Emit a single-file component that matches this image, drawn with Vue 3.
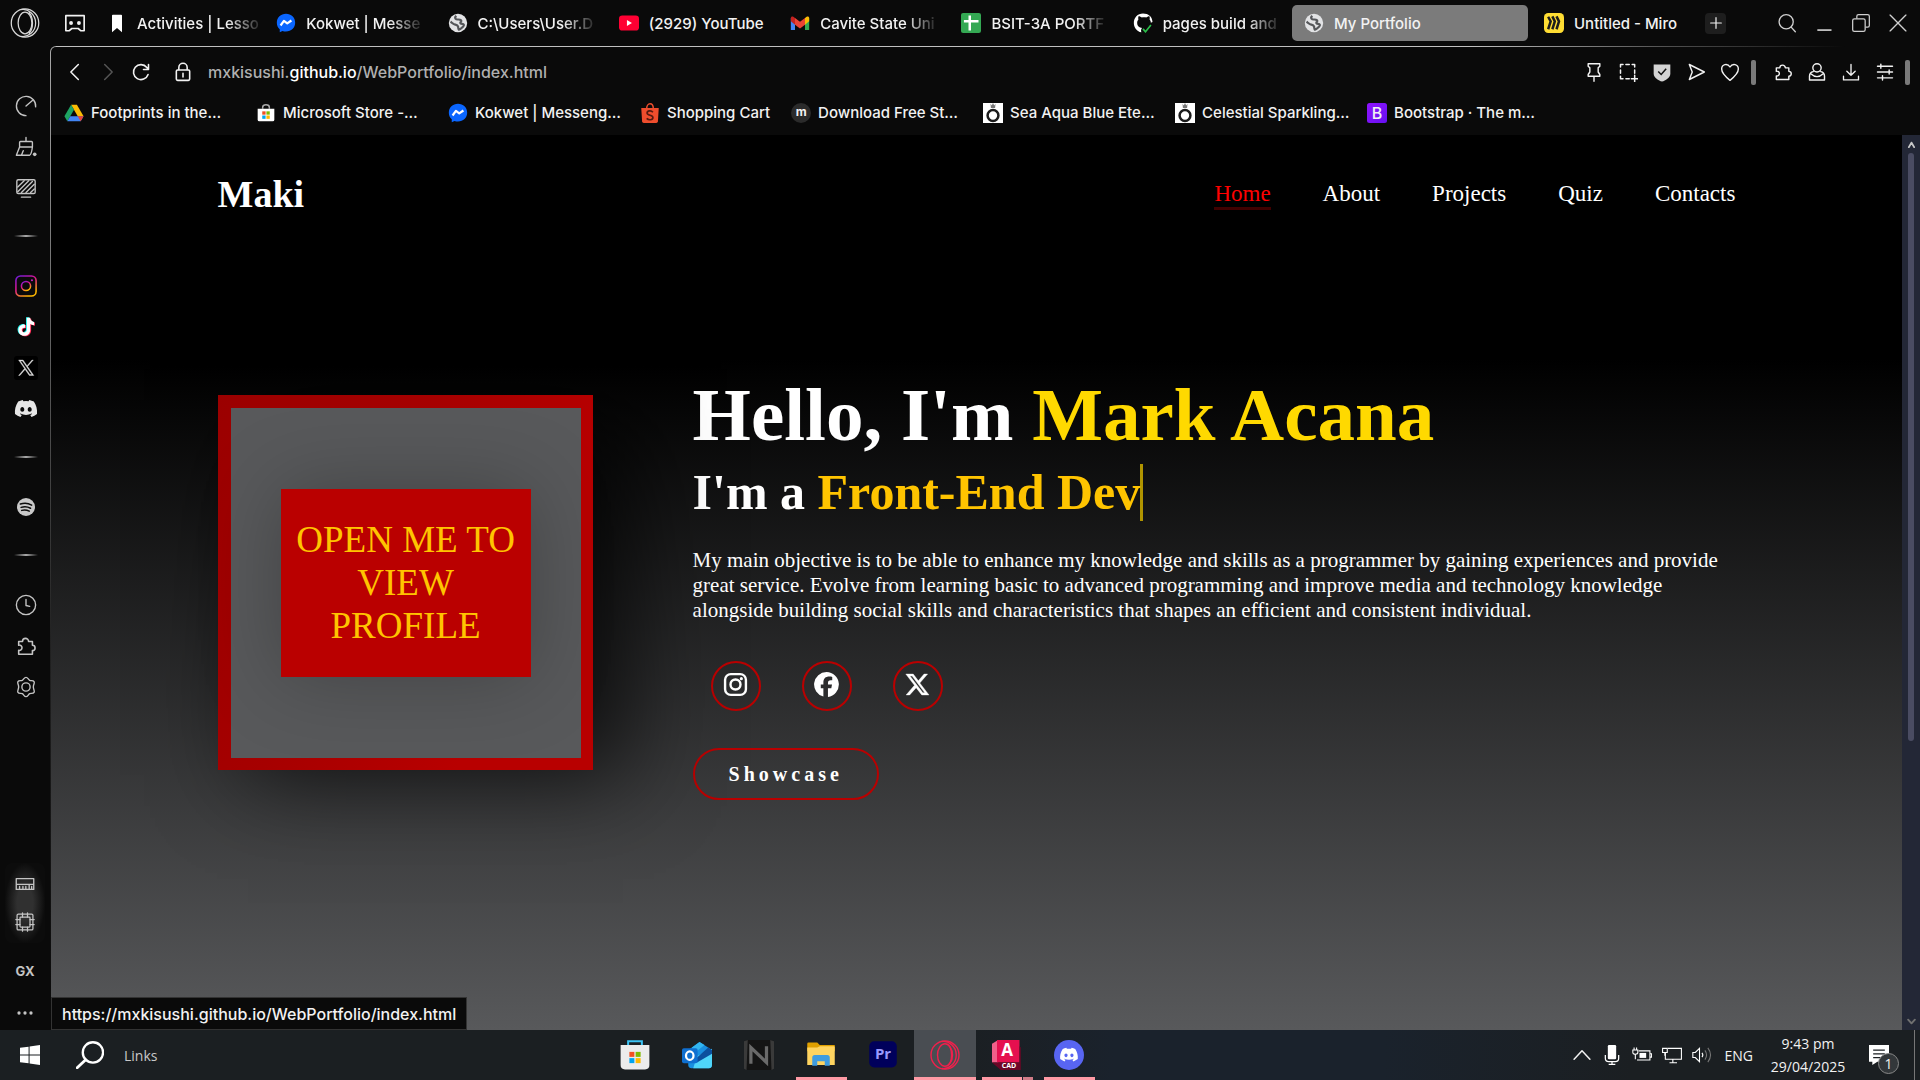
<script setup>
const stroke = (body, width = 1.5) =>
  `<g fill="none" stroke="currentColor" stroke-width="${width}" stroke-linecap="round" stroke-linejoin="round">${body}</g>`

const puzzle = stroke('<path d="M4 7h4.200a3.300 3.300 0 1 1 6.600 0H19v4.200a2.900 2.900 0 1 1 0 5.800V21H4v-4.300a2.900 2.900 0 1 0 0-5.600z"/>', 1.7)
const globe = '<circle cx="12" cy="12" r="11" fill="#e2e3e5"/><path d="M10 3.500C7 6 9.500 8 12 7.800c3.500-.2 5 1.700 3.200 3.200-1 .8-.2 2 1.800 2s3 1.500 1 3.500-3.500 3-5 3.500c-1-1-.5-2.500-1-4-.6-1.700-2.500-1.800-4-2.300S4.500 11.500 3 10.500" fill="none" stroke="#55575a" stroke-width="2.600" stroke-linejoin="round"/>'
const messenger = '<path d="M12 1C5.700 1 1 5.500 1 11.600c0 3.200 1.300 6 3.500 7.900V23l3.300-1.500c1.300.4 2.700.6 4.200.6 6.300 0 11-4.500 11-10.500S18.300 1 12 1z" fill="#0a66ff"/><path d="M5.500 15l4-5.500 4 3 5-3.500" fill="none" stroke="#fff" stroke-width="2.600" stroke-linejoin="round"/>'
const discordShape = 'M19.800 4.600A18 18 0 0 0 15.300 3l-.7 1.300a17 17 0 0 0-5.200 0L8.700 3a18 18 0 0 0-4.500 1.600C1.400 8.800.6 13 1 17.100A18 18 0 0 0 6.500 20l1.300-2c-.7-.3-1.300-.6-1.900-1l.5-.4a13 13 0 0 0 11.200 0l.5.4c-.6.4-1.200.7-1.900 1l1.300 2a18 18 0 0 0 5.500-2.900c.5-4.800-.8-8.900-3.200-12.500zM8.300 14.700c-1.100 0-2-1-2-2.300s.9-2.300 2-2.300 2 1 2 2.300-.9 2.300-2 2.300zm7.400 0c-1.100 0-2-1-2-2.300s.9-2.300 2-2.300 2 1 2 2.300-.9 2.300-2 2.300z'
const xShape = 'M14.300 10.200L22.300 1h-1.900l-7 8L7.900 1H1.500l8.400 12.100L1.500 22.800h1.900l7.300-8.500 5.900 8.500H23zM4.100 2.400H7l13.300 19h-2.900z'
const note = 'M13 2h3.500c.2 2.500 1.800 4.200 4.300 4.500V10c-1.600 0-3-.5-4.200-1.300V15c0 8.500-12.300 8.800-12.800.5C3.700 11.400 7 8.800 11 9.300v3.700c-2-.5-3.700.6-3.600 2.400.2 3.600 5.600 3.300 5.600-.6z'
const ring = '<rect width="24" height="24" fill="#fff"/><circle cx="12" cy="15" r="6.500" fill="none" stroke="#1b1b1b" stroke-width="3"/><path d="M9 1l1.500 2L12 0l1.500 3L15 1l-.5 5h-5z" fill="#777"/>'
const igBody = '<rect x="2" y="2" width="20" height="20" rx="5.500"/><circle cx="12" cy="12" r="4.800"/>'

const icons = {
  opera: '<g fill="none" stroke="currentColor" stroke-width="1"><ellipse cx="12" cy="12" rx="11" ry="11.300"/><ellipse cx="12" cy="12" rx="5.500" ry="8.700"/><path d="M9 1.300C14 .5 20.500 4.500 20.500 12S14 23.500 9 22.700M15 3.600c4 3.400 4 13.400 0 16.800"/></g>',
  operaRed: '<g fill="none" stroke="#f0204c" stroke-width="1.100"><circle cx="12" cy="12" r="11.200"/><ellipse cx="12" cy="12" rx="6" ry="9"/><path d="M9.500 1.200C15 .5 21 5 21 12s-6 11.500-11.500 10.800M13.500 3.200C18.500 6 18.500 18 13.500 20.800"/></g>',
  island: stroke('<path d="M2 4h20v16.500h-3.500l-3-2.500h-7l-3 2.500H2z"/>', 1.8) + '<circle cx="7.700" cy="12" r="2.100" fill="currentColor"/><circle cx="16.300" cy="12" r="2.100" fill="currentColor"/>',
  bookmark: '<path d="M6 3q0-1 1-1h10q1 0 1 1v20l-6-5-6 5z" fill="#fff"/>',
  messenger, globe, ring, puzzle,
  youtube: '<rect x="0" y="3" width="24" height="18" rx="4" fill="#ff0033"/><path d="M9.500 8.500v7l6-3.500z" fill="#fff"/>',
  gmail: '<path d="M1 6v14.500h5V11z" fill="#4285f4"/><path d="M23 6v14.500h-5V11z" fill="#34a853"/><path d="M1 6v4l5 4V6L4 4.500C2.500 3.500 1 4.500 1 6z" fill="#c5221f"/><path d="M23 6v4l-5 4V6l2-1.500c1.500-1 3 0 3 1.500z" fill="#fbbc04"/><path d="M6 6l6 4.500L18 6v8l-6 4.500L6 14z" fill="#ea4335"/>',
  sheets: '<rect x="0" y="0" width="24" height="24" rx="2.500" fill="#34a853"/><path d="M10.500 3v18M3.500 10h17.500" stroke="#fff" stroke-width="3"/>',
  github: '<path d="M10 23c-1-3 .2-4.200 1-5-3.600-.5-6-2.200-6-6.300 0-1.700.6-3 1.500-4-.3-1-.3-2.500.2-3.700 1.700 0 2.800.8 3.800 1.500 1.700-.4 3.800-.4 5.500 0 1-.7 2-1.500 3.700-1.500.5 1.200.5 2.700.2 3.700 1 1 1.500 2.300 1.500 4l2-1C23 4 18.500.5 12 .5 5.500.5 1 5.500 1 12c0 5 3 9 7 10.700z" fill="#fff"/><path d="M12 19l3 3.500 6.500-8" fill="none" stroke="#2bbf4a" stroke-width="2"/>',
  miro: '<rect width="24" height="24" rx="5" fill="#ffdd33"/><path d="M5 4.500l3 5.500-3 9.500M10 4l3 6-3 9.500M15 4l3 6-3 9.500" fill="none" stroke="#1c1c1c" stroke-width="3"/>',
  plus: stroke('<path d="M12 4v16M4 12h16"/>', 1.8),
  search: stroke('<circle cx="11" cy="10.500" r="8.500"/><path d="M17 17l5 5.500"/>', 1.6),
  minimize: '<path d="M4 20.500h17" stroke="currentColor" stroke-width="2"/>',
  restore: stroke('<rect x="2" y="7" width="15" height="15" rx="2"/><path d="M7 6V4q0-2 2-2h11q2 0 2 2v11q0 2-2 2h-2"/>', 1.5),
  close: stroke('<path d="M2.500 2.500l19 19M21.500 2.500l-19 19"/>', 1.6),
  back: stroke('<path d="M16 3L7 12l9 9"/>', 1.8),
  forward: stroke('<path d="M8 3l9 9-9 9"/>', 1.8),
  reload: stroke('<path d="M20.500 15A9 9 0 1 1 19 6.500L21 9M21 3v6h-6"/>', 1.9),
  lock: stroke('<rect x="4" y="9.500" width="16" height="12.500" rx="1.500"/><path d="M7 9V6.500a5 5 0 0 1 10 0V9M12 13.500V18"/>', 1.9),
  pin: stroke('<path d="M5 2h14v3l-2 2v5l2 3v2H5v-2l2-3V7L5 5zM12 17v6"/>', 1.7),
  snapshot: stroke('<path d="M3 6V3h3M9.500 3h4M17 3h3v3M20 9.500v4M3 9.500v4M3 17v3h3M9.500 20h4M20 16v8M16 20h8"/>', 1.8),
  shield: '<path d="M2 3h20v11c0 5-6 8-10 9.500C8 22 2 19 2 14z" fill="#d3d3d3"/><path d="M7.500 11.500l3.500 3.500 6-7" fill="none" stroke="#111" stroke-width="1.800"/>',
  send: stroke('<path d="M4 3l18 9L4 21l3.500-9z"/>', 1.7),
  heart: stroke('<path d="M12 22C5 16.500 2 13 2 8.500 2 2.500 9 1 12 6c3-5 10-3.500 10 2.500 0 4.500-3 8-10 13.500z"/>', 1.7),
  person: stroke('<circle cx="12" cy="7" r="5"/><path d="M7.500 11.500C4.500 12 3 14 3 17v4.500h18V17c0-3-1.500-5-4.500-5.500M5 14.500c4 4 10 4 14 0"/>', 1.7),
  download: stroke('<path d="M12 3v13M7 11l5 5 5-5M3 17v4.500h18V17"/>', 1.6),
  sliders: stroke('<path d="M3 5h18M3 12h18M3 19h18M7 2.500v5M17 9.500v5M9 16.500v5"/>', 1.7),
  drive: '<path d="M8.500 2h7l8 14h-7z" fill="#fbbc04"/><path d="M8.500 2L.5 16 4 22l8-14z" fill="#1ea362"/><path d="M7.500 16h16L20 22H4z" fill="#4285f4"/><path d="M16.500 16h7L20 22z" fill="#ea4335"/>',
  store: '<path d="M8 7V5q0-3 4-3t4 3v2" fill="none" stroke="#aaa" stroke-width="1.800"/><path d="M2 7h20v13q0 2-2 2H4q-2 0-2-2z" fill="#fff"/><path d="M7.500 10h4v4h-4z" fill="#f25022"/><path d="M12.500 10h4v4h-4z" fill="#7fba00"/><path d="M7.500 15h4v4h-4z" fill="#00a4ef"/><path d="M12.500 15h4v4h-4z" fill="#ffb900"/>',
  shopee: '<path d="M8 7c0-8 8-8 8 0" fill="none" stroke="#ee4d2d" stroke-width="1.800"/><path d="M1.500 6h21l-1 16q-.2 2-2 2h-15q-1.800 0-2-2z" fill="#ee4d2d"/><path d="M15.500 11c-2-2.500-7-2-7 1 0 3.300 7.200 2.300 7 5.500-.2 3-5 3.500-7.500 1" fill="none" stroke="#561a10" stroke-width="2"/>',
  mdisc: '<circle cx="12" cy="12" r="12" fill="#2b2b2b"/>',
  bootstrap: '<defs><linearGradient id="bs" x1="0" y1="0" x2="1" y2="1"><stop offset="0" stop-color="#9013fe"/><stop offset="1" stop-color="#6610f2"/></linearGradient></defs><rect width="24" height="24" rx="3" fill="url(#bs)"/>',
  speed: stroke('<path d="M22.500 13A10.500 10.500 0 1 0 12 22.500M12 12l7-6"/>', 1.5),
  broom: stroke('<path d="M12 1.500V6M6 6h12q1 0 1 1v5H5V7q0-1 1-1zM5 12L1.500 21H16q2-1 3-9M7 21l2-5"/>', 1.5) + '<circle cx="21.500" cy="20" r="2" fill="currentColor"/>',
  wallpaper: stroke('<rect x="2" y="3" width="20" height="15" rx="1.500"/><path d="M7 22h10M3 11l7-7M3 16L15 4M7 17L19 5M12 17l9-9M17 17l4-4"/>', 1.5),
  instagram: '<defs><linearGradient id="ig" x1="0" y1="0" x2=".6" y2="1"><stop offset="0" stop-color="#6a1be0"/><stop offset=".5" stop-color="#e0178c"/><stop offset="1" stop-color="#ffb800"/></linearGradient></defs><g fill="none" stroke="url(#ig)" stroke-width="1.700"><rect x="1" y="1" width="22" height="22" rx="5"/><circle cx="12" cy="12" r="5"/></g><circle cx="18.500" cy="5.700" r="1.200" fill="#c420b8"/>',
  tiktok: `<path d="${note}" fill="#25f4ee" transform="translate(-1 -.6)"/><path d="${note}" fill="#fe2c55" transform="translate(1 .6)"/><path d="${note}" fill="#fff"/>`,
  xTile: `<rect width="24" height="24" rx="3" fill="#000"/><path d="${xShape}" fill="#ddd" stroke="#ddd" stroke-width=".5" transform="translate(3.500 3.300) scale(.71)"/>`,
  discord: `<path d="${discordShape}" fill="#e6e6e6"/>`,
  spotify: '<circle cx="12" cy="12" r="12" fill="#c9c9c9"/><path d="M4.500 8c5-1.600 11-1 15 1.500M5.500 12.500c4.500-1.300 9-.8 12.500 1.200M6.300 16.500c3.500-1 7-.6 10 1" fill="none" stroke="#0c0c0c" stroke-width="2" stroke-linecap="round"/>',
  history: stroke('<circle cx="12" cy="12" r="10.500"/><path d="M12 6v6.500l4 1"/>', 1.5),
  gear: stroke('<path d="M12 1.500c2 0 2.500 2.500 4 3.200s3.800-.3 4.800 1.400-.8 3.300-.8 5.900 1.800 4.200.8 5.900-3.300.7-4.800 1.400-2 3.200-4 3.200-2.500-2.500-4-3.200-3.800.3-4.800-1.400S4 14.600 4 12s-1.800-4.200-.8-5.900 3.300-.7 4.800-1.400 2-3.200 4-3.200z"/><circle cx="12" cy="12" r="4.500"/>', 1.5),
  ram: stroke('<path d="M1.500 5.500h21v13h-21zM1.500 12.500h21M5.500 15v3M9.500 15v3M13 15v3M17 13v5M20 15v3"/>', 1.6),
  cpu: stroke('<rect x="2.500" y="2.500" width="19" height="19" rx="1.500"/><rect x="6" y="6" width="12" height="12" rx="1"/><path d="M9 1v5M15 1v5M9 18v5M15 18v5M1 9h5M1 15h5M18 9h5M18 15h5"/>', 1.5),
  dots: '<circle cx="4" cy="12" r="2.200" fill="currentColor"/><circle cx="12" cy="12" r="2.200" fill="currentColor"/><circle cx="20" cy="12" r="2.200" fill="currentColor"/>',
  igWhite: `<g fill="none" stroke="#fff" stroke-width="2.300">${igBody}</g><circle cx="17.600" cy="6.400" r="1.500" fill="#fff"/>`,
  facebook: '<path d="M12 0a12 12 0 0 0-3 23.600V15.600H6.500V12H9v-1.600c0-4.100 1.900-6 5.900-6 .8 0 2 .1 2.600.3v3.300h-1.400c-2 0-2.700.7-2.700 2.700V12h3.900l-.7 3.600h-3.200v8.300A12 12 0 0 0 12 0z" fill="#fff"/>',
  xWhite: '<path d="M17.500 2.500h3.400l-7.500 8.600 8.800 11.400h-6.900l-5.400-6.900-6.200 6.900H.3l8-9.200L0 2.500h7.100L12 8.900zm-1.200 18h1.900L6 4.400H4z" fill="#fff" stroke="#fff" stroke-width=".4" transform="translate(.8 -.5)"/>',
  windows: '<path d="M0 3.400L10.300 2v9.500H0zM11.500 1.800L24 0v11.500H11.500zM0 12.600h10.300V22L0 20.600zM11.500 12.600H24V24l-12.500-1.800z" fill="#fff"/>',
  taskSearch: '<circle cx="14.500" cy="9.800" r="8.700" fill="none" stroke="#fff" stroke-width="2"/><path d="M8.300 16L1 23" stroke="#fff" stroke-width="2.400" stroke-linecap="round"/>',
  msStore: '<path d="M6.500 4V1h11v3" fill="none" stroke="#3cc4f5" stroke-width="1.600"/><path d="M.5 4h23v16q0 3.500-3.500 3.500H4Q.5 23.500.5 20z" fill="#ececec"/><path d="M7.500 9.500h4v4h-4z" fill="#f25022"/><path d="M12.500 9.500h4v4h-4z" fill="#7fba00"/><path d="M7.500 14.500h4v4h-4z" fill="#00a4ef"/><path d="M12.500 14.500h4v4h-4z" fill="#ffb900"/>',
  outlook: '<path d="M5 8L14 1.500 24 8v12q0 2.500-2.500 2.500h-14Q5 22.500 5 20z" fill="#1a8fe0"/><path d="M8 6l6-4.500 4 2.500-10 8z" fill="#32b5f0"/><path d="M12 13L24 7v13q0 2.500-2.500 2.500H9z" fill="#4fd5fa"/><path d="M12 14l9-8 3 2v3l-12 7z" fill="#0c4f9e"/><rect x="0" y="6.500" width="12.500" height="12" rx="1.500" fill="#0f6fd0"/><ellipse cx="6.200" cy="12.500" rx="3" ry="3.400" fill="none" stroke="#fff" stroke-width="1.800"/>',
  nApp: '<path d="M0 1l3-1h18l3 1v22l-3 1H3l-3-1z" fill="#141414"/><path d="M0 1l3-1-1 24-2-1zM24 1l-3-1 1 24 2-1z" fill="#3a3a3a"/><path d="M5.500 19V6l12.500 12V5" fill="none" stroke="#6a6a6a" stroke-width="2.600"/>',
  explorer: '<path d="M1 3q0-1 1-1h7l2 2h12v5H1z" fill="#e0a000"/><path d="M1 6h8l2-1h11.500q.5 0 .5.500V20H1z" fill="#ffd460"/><path d="M5 20.500V14q0-2 2-2h10q2 0 2 2v6.500h-4V17H9v3.500z" fill="#3f9ce0"/>',
  premiere: '<rect x="1" y="1" width="22" height="21" rx="4" fill="#00005b"/>',
  autocad: '<path d="M0 3l5-3v18H0z" fill="#f0608a"/><path d="M4 0h18v18H4z" fill="#e5104f"/><path d="M22 5l1 1v18H7L0 18h22z" fill="#6d0626"/>',
  discordApp: `<circle cx="12" cy="12" r="12" fill="#5865f2"/><path d="${discordShape}" fill="#fff" transform="translate(4.300 4.300) scale(.64)"/>`,
  chevron: stroke('<path d="M2.500 17L12 7l9.500 10"/>', 1.8),
  mic: '<rect x="7" y="0" width="10" height="17" rx="1.500" fill="#fff"/><path d="M4 12v4q0 4 4 4h8q4 0 4-4v-4M12 20v3M8 23.200h8" fill="none" stroke="#fff" stroke-width="1.500"/>',
  battery: '<path d="M8 7h13.500v11H6M22 10.500h1.500v4H22" fill="none" stroke="#fff" stroke-width="1.300"/><path d="M9 9.500h8v6H9z" fill="#fff"/><path d="M1 6h6v3q0 2-3 2T1 9zM2.500 3v3M5.500 3v3M4 11v6" fill="none" stroke="#fff" stroke-width="1.300"/>',
  monitor: '<path d="M7 4h16.300v13H4V9M13 17v4M9 21.300h9" fill="none" stroke="#fff" stroke-width="1.300"/><path d="M.7 4h5.600v5H.7zM3.500 9v4" fill="none" stroke="#fff" stroke-width="1.300"/>',
  speaker: '<path d="M1 9h3l5-5v16l-5-5H1z" fill="none" stroke="#fff" stroke-width="1.300"/><path d="M12 9.500q2 2.500 0 5" fill="none" stroke="#fff" stroke-width="1.300"/><path d="M15.500 6.500q4 5.500 0 11M19 3.500q6.500 8.500 0 17" fill="none" stroke="#777" stroke-width="1.300"/>',
  notice: '<path d="M0 0h24v20H10l-6 4v-4H0z" fill="#fff"/><path d="M5 6h14M5 10.500h14M5 15h9" stroke="#1b1f22" stroke-width="1.500"/>',
  up: stroke('<path d="M5 19l7-12 7 12"/>', 5),
  down: stroke('<path d="M3 7l9 10 9-10"/>', 5),
}

const tabs = [
  { icon: 'bookmark', label: 'Activities | Lesso' },
  { icon: 'messenger', label: 'Kokwet | Messe' },
  { icon: 'globe', label: 'C:\\Users\\User.D' },
  { icon: 'youtube', label: '(2929) YouTube' },
  { icon: 'gmail', label: 'Cavite State Uni' },
  { icon: 'sheets', label: 'BSIT-3A PORTF' },
  { icon: 'github', label: 'pages build and' },
]
const bookmarks = [
  { icon: 'drive', label: 'Footprints in the…' },
  { icon: 'store', label: 'Microsoft Store -…' },
  { icon: 'messenger', label: 'Kokwet | Messeng…' },
  { icon: 'shopee', label: 'Shopping Cart', short: true },
  { icon: 'mdisc', label: 'Download Free St…', mark: 'm' },
  { icon: 'ring', label: 'Sea Aqua Blue Ete…' },
  { icon: 'ring', label: 'Celestial Sparkling…' },
  { icon: 'bootstrap', label: 'Bootstrap · The m…', mark: 'B' },
]
const sideGroups = [
  ['speed', 'broom', 'wallpaper'],
  ['instagram', 'tiktok', 'xTile', 'discord'],
  ['spotify'],
  ['history', 'puzzle', 'gear'],
]
const pageTools = ['pin', 'snapshot', 'shield', 'send', 'heart']
const browserTools = ['puzzle', 'person', 'download', 'sliders']
const nav = ['Home', 'About', 'Projects', 'Quiz', 'Contacts']
const socials = ['igWhite', 'facebook', 'xWhite']
const apps = [
  { icon: 'msStore' },
  { icon: 'outlook' },
  { icon: 'nApp' },
  { icon: 'explorer', state: 'open' },
  { icon: 'premiere', mark: 'Pr' },
  { icon: 'operaRed', state: 'active' },
  { icon: 'autocad', state: 'multi', mark: 'A', sub: 'CAD' },
  { icon: 'discordApp', state: 'open' },
]
const tray = ['chevron', 'mic', 'battery', 'monitor', 'speaker']
</script>

<template>
  <div class="desktop">
    <div class="window">
      <aside class="sidebar">
        <button class="logo" aria-label="Opera menu"><svg viewBox="0 0 24 24" v-html="icons.opera"></svg></button>
        <div v-for="(group, i) in sideGroups" :key="i" class="side-group">
          <button v-for="name in group" :key="name" class="side-btn" :class="name" :aria-label="name">
            <svg viewBox="0 0 24 24" v-html="icons[name]"></svg>
          </button>
        </div>
        <div class="side-bottom">
          <div class="meters">
            <button aria-label="RAM"><svg viewBox="0 0 24 24" v-html="icons.ram"></svg></button>
            <button aria-label="CPU"><svg viewBox="0 0 24 24" v-html="icons.cpu"></svg></button>
          </div>
          <button class="gx">GX</button>
          <button class="more" aria-label="More"><svg viewBox="0 0 24 24" v-html="icons.dots"></svg></button>
        </div>
      </aside>

      <div class="browser">
        <div class="tabbar">
          <button class="island" aria-label="Tab islands"><svg viewBox="0 0 24 24" v-html="icons.island"></svg></button>
          <div class="tabs">
            <button v-for="tab in tabs" :key="tab.label" class="tab">
              <svg viewBox="0 0 24 24" v-html="icons[tab.icon]"></svg>
              <span class="fade">{{ tab.label }}</span>
            </button>
          </div>
          <button class="tab current"><svg viewBox="0 0 24 24" v-html="icons.globe"></svg><span>My Portfolio</span></button>
          <button class="tab last"><svg viewBox="0 0 24 24" v-html="icons.miro"></svg><span>Untitled - Miro</span></button>
          <button class="new-tab" aria-label="New tab"><svg viewBox="0 0 24 24" v-html="icons.plus"></svg></button>
          <div class="controls">
            <button v-for="name in ['search', 'minimize', 'restore', 'close']" :key="name" :aria-label="name">
              <svg viewBox="0 0 24 24" v-html="icons[name]"></svg>
            </button>
          </div>
        </div>

        <div class="frame">
          <div class="frame-inner">
            <div class="addressbar">
              <button aria-label="Back"><svg viewBox="0 0 24 24" v-html="icons.back"></svg></button>
              <button class="dim" aria-label="Forward"><svg viewBox="0 0 24 24" v-html="icons.forward"></svg></button>
              <button aria-label="Reload"><svg viewBox="0 0 24 24" v-html="icons.reload"></svg></button>
              <svg class="lock" viewBox="0 0 24 24" v-html="icons.lock"></svg>
              <div class="url">mxkisushi.<b>github.io</b>/WebPortfolio/index.html</div>
              <div class="tools">
                <button v-for="name in pageTools" :key="name" :aria-label="name"><svg viewBox="0 0 24 24" v-html="icons[name]"></svg></button>
              </div>
              <i class="bar"></i>
              <div class="tools second">
                <button v-for="name in browserTools" :key="name" :aria-label="name"><svg viewBox="0 0 24 24" v-html="icons[name]"></svg></button>
              </div>
              <i class="bar"></i>
            </div>
            <div class="bookmarks">
              <a v-for="item in bookmarks" :key="item.label" href="#" :class="{ short: item.short }">
                <span class="fav"><svg viewBox="0 0 24 24" v-html="icons[item.icon]"></svg><b v-if="item.mark" :class="{ big: item.mark === 'B' }">{{ item.mark }}</b></span>
                <span>{{ item.label }}</span>
              </a>
            </div>

            <div class="viewport">
              <div class="page">
                <header class="header">
                  <a href="#" class="brand">Maki</a>
                  <nav>
                    <a v-for="(item, i) in nav" :key="item" href="#" :class="{ on: i === 0 }">{{ item }}</a>
                  </nav>
                </header>
                <section class="home">
                  <div class="portrait"><div class="portrait-inner"><button class="cover">OPEN ME TO VIEW PROFILE</button></div></div>
                  <div class="intro">
                    <h1>Hello, I'm <span>Mark Acana</span></h1>
                    <h2>I'm a <span>Front-End Dev</span></h2>
                    <p>My main objective is to be able to enhance my knowledge and skills as a programmer by gaining experiences and provide great service. Evolve from learning basic to advanced programming and improve media and technology knowledge alongside building social skills and characteristics that shapes an efficient and consistent individual.</p>
                    <div class="socials">
                      <a v-for="name in socials" :key="name" href="#" :aria-label="name"><svg viewBox="0 0 24 24" v-html="icons[name]"></svg></a>
                    </div>
                    <a href="#" class="showcase">Showcase</a>
                  </div>
                </section>
              </div>
              <div class="scrollbar">
                <svg viewBox="0 0 24 24" v-html="icons.up"></svg>
                <div class="track"><div class="thumb"></div></div>
                <svg class="faint" viewBox="0 0 24 24" v-html="icons.down"></svg>
              </div>
              <div class="status">https://mxkisushi.github.io/WebPortfolio/index.html</div>
            </div>
          </div>
        </div>
      </div>
    </div>

    <footer class="taskbar">
      <div class="left">
        <button class="start" aria-label="Start"><svg viewBox="0 0 24 24" v-html="icons.windows"></svg></button>
        <button class="find" aria-label="Search"><svg viewBox="0 0 24 24" v-html="icons.taskSearch"></svg></button>
        <span>Links</span>
      </div>
      <div class="apps">
        <button v-for="app in apps" :key="app.icon" class="app" :class="app.state" :aria-label="app.icon">
          <svg viewBox="0 0 24 24" v-html="icons[app.icon]"></svg>
          <b v-if="app.mark" :class="app.icon">{{ app.mark }}</b>
          <small v-if="app.sub">{{ app.sub }}</small>
        </button>
      </div>
      <div class="tray">
        <svg v-for="name in tray" :key="name" viewBox="0 0 24 24" v-html="icons[name]"></svg>
        <span class="lang">ENG</span>
        <div class="datetime"><span>9:43 pm</span><span>29/04/2025</span></div>
        <button class="notice" aria-label="Notifications"><svg viewBox="0 0 24 24" v-html="icons.notice"></svg><b>1</b></button>
        <i class="peek"></i>
      </div>
    </footer>
  </div>
</template>

<style>
body { margin: 0; background: #0a0a0a; }
</style>

<style scoped>
* { box-sizing: border-box; }
button { appearance: none; background: none; border: 0; padding: 0; margin: 0; font: inherit; color: inherit; display: flex; align-items: center; justify-content: center; }
a { color: inherit; text-decoration: none; }
svg { display: block; flex: none; }

.desktop { min-height: 100vh; display: flex; flex-direction: column; background: #0a0a0a; color: #f2f2f2; font-family: Inter, "Liberation Sans", sans-serif; font-size: 15px; }
.window { flex: 1; display: flex; }

.sidebar { width: 50px; flex: none; display: flex; flex-direction: column; color: #c4c4c4; }
.logo { height: 46px; width: 50px; margin-bottom: 39px; color: #d8d8d8; }
.logo svg { width: 30px; height: 30px; }
.side-group { display: flex; flex-direction: column; padding-left: 2px; align-items: center; }
.side-group + .side-group { padding-top: 30px; margin-top: 27px; position: relative; }
.side-group + .side-group::before { content: ""; position: absolute; top: 0; left: 14px; width: 24px; height: 2px; background: linear-gradient(90deg, transparent, #aaa, transparent); }
.side-btn { height: 41px; }
.side-btn svg { width: 22px; height: 22px; }
.side-btn.xTile svg, .side-btn.discord svg { width: 24px; height: 24px; }
.side-btn.spotify svg { width: 18px; height: 18px; }
.side-bottom { margin-top: auto; display: flex; flex-direction: column; align-items: center; }
.meters { width: 40px; height: 80px; margin-bottom: 4px; display: flex; flex-direction: column; align-items: center; justify-content: center; gap: 18px; background: radial-gradient(closest-side, #303030 40%, #0c0c0c); border-radius: 8px; }
.meters svg { width: 20px; height: 20px; }
.gx { height: 48px; font-size: 13px; font-weight: 700; }
.more { height: 35px; }
.more svg { width: 18px; height: 18px; }

.browser { flex: 1; min-width: 0; display: flex; flex-direction: column; }
.tabbar { height: 46px; display: flex; align-items: center; }
.island { width: 49px; }
.island svg { width: 22px; height: 22px; }
.tabs { flex: 1; min-width: 0; display: flex; }
.tab { flex: 1; min-width: 0; height: 36px; padding: 0 8px 0 12px; gap: 10px; justify-content: flex-start; font-weight: 500; white-space: nowrap; text-align: left; }
.tab svg { width: 20px; height: 20px; }
.fade { mask-image: linear-gradient(90deg, #000 74%, #0003 98%); }
.tab:nth-child(1) { padding: 0 6px 0 8px; }
.tab:nth-child(4) .fade { mask-image: none; }
.tab.current { flex: none; width: 236px; background: #7b7b7b; border-radius: 5px; }
.tab.last { flex: none; width: 170px; padding-left: 16px; }
.new-tab { width: 21px; height: 21px; margin-left: 7px; border-radius: 4px; background: #1e1e1e; }
.new-tab svg { width: 16px; height: 16px; }
.controls { display: flex; margin-left: 42px; padding-right: 4px; color: #cfcfcf; }
.controls button { width: 37px; }
.controls svg { width: 20px; height: 20px; }

.frame { flex: 1; display: flex; padding: 1px 0 0 1px; border-radius: 6px 0 0 0; background: linear-gradient(#a8a8a8, #a8a8a8) 0 0 / 6px 6px no-repeat, linear-gradient(90deg, #c0c0c0 76%, #555 86%, transparent 96%) 0 0 / 100% 1px no-repeat, linear-gradient(#a8a8a8, #555 35%, #222 60%, transparent) 0 0 / 1px 100% no-repeat; }
.frame-inner { flex: 1; min-width: 0; display: flex; flex-direction: column; background: #0a0a0a; border-radius: 5px 0 0 0; }
.addressbar { height: 50px; display: flex; align-items: center; padding: 0 10px 0 7px; }
.addressbar button { width: 33px; }
.addressbar svg { width: 20px; height: 20px; }
.addressbar .dim { color: #555; }
.addressbar .lock { margin: 0 15px 0 16px; }
.url { flex: 1; font-size: 16px; font-weight: 500; color: #b0b0b0; }
.url b { font-weight: 500; color: #fff; }
.tools { display: flex; }
.addressbar .tools button { width: 34px; }
.tools.second { padding: 0 3px 0 10px; }
.bar { width: 5px; height: 25px; border-radius: 2px; background: #7a7a7a; }
.tools:not(.second) + .bar { margin-left: 4px; }
.bookmarks { height: 38px; display: flex; gap: 21px; padding: 0 0 7px 13px; align-items: center; font-weight: 500; }
.bookmarks a { width: 171px; display: flex; align-items: center; gap: 7px; white-space: nowrap; }
.bookmarks a.short { width: auto; }
.fav { width: 20px; height: 20px; position: relative; flex: none; }
.fav svg { width: 20px; height: 20px; }
.fav b { position: absolute; inset: 0; text-align: center; font-size: 12px; line-height: 18px; }
.fav b.big { font-size: 16px; line-height: 20px; font-weight: 500; }

.viewport { flex: 1; display: flex; position: relative; }
.page { flex: 1; min-width: 0; display: flex; flex-direction: column; position: relative; background: linear-gradient(#000 25%, #58595b); font-family: "Liberation Serif", "Times New Roman", serif; color: #fff; }
.header { position: absolute; top: 0; left: 0; right: 0; height: 118px; padding: 0 9%; display: flex; align-items: center; justify-content: space-between; }
.brand { font-size: 38px; font-weight: 700; }
nav { display: flex; gap: 52px; font-size: 23px; line-height: 26px; }
nav a { border-bottom: 3px solid transparent; padding: 3px 0 0; }
nav a.on { color: #f00; border-color: #400000; }
.home { flex: 1; display: flex; align-items: center; gap: 100px; padding: 0 9%; }
.portrait { flex: none; padding: 13px 12px 12px 13px; background: linear-gradient(115deg, #9b0000, #a60000 40%, #b80000 75%); box-shadow: 30px 5px 86px rgba(0, 0, 0, .7); position: relative; z-index: 1; }
.portrait-inner { width: 350px; height: 350px; display: flex; align-items: center; justify-content: center; background: #58595b; }
.cover { width: 250px; height: 188px; padding-bottom: 2px; background: #ba0000; color: #ffc400; font-size: 37px; line-height: 43px; box-shadow: 0 0 80px rgba(0, 0, 0, .25); text-align: center; }
.intro { flex: 1; min-width: 0; }
h1 { margin: 0; font-size: 75px; line-height: 99px; }
h1 span { color: #ffd900; }
h2 { margin: 0 0 27px; font-size: 50px; line-height: 57px; display: flex; white-space: pre; }
h2 span { color: #ffc400; border-right: 3px solid #b09400; }
p { margin: 0; font-size: 21px; line-height: 25px; }
.socials { display: flex; gap: 41px; margin: 38px 18px 37px; }
.socials a { width: 50px; height: 50px; border: 2px solid #ba0000; border-radius: 50%; display: flex; align-items: center; justify-content: center; padding-bottom: 3px; }
.socials svg { width: 25px; height: 25px; }
.showcase { display: inline-block; border: 2px solid #ba0000; border-radius: 26px; padding: 0 34px; font-size: 20px; line-height: 48px; font-weight: 700; letter-spacing: 4px; vertical-align: top; }

.scrollbar { width: 18px; flex: none; display: flex; flex-direction: column; align-items: center; padding: 5px 0 4px; background: #232736; color: #c8c8c8; }
.scrollbar svg { width: 9px; height: 9px; }
.scrollbar .faint { color: #707070; }
.track { flex: 1; width: 6px; padding-top: 4px; }
.thumb { height: 68%; background: #4a4c62; border-radius: 3px; }
.status { position: absolute; left: 0; bottom: 0; height: 33px; padding: 0 10px; display: flex; align-items: center; font-size: 16px; font-weight: 500; background: #0a0a0a; border: 1px solid #333; z-index: 2; }

.taskbar { height: 50px; display: flex; align-items: center; background: linear-gradient(90deg, #1b1f22 50%, #1a222c 58%, #1a222c 72%, #1b1f22 85%); font-family: "Open Sans", "Noto Sans", sans-serif; font-size: 15px; }
.left { flex: 0 1 604px; display: flex; align-items: center; color: #c9c9c9; font-size: 14px; }
.start { width: 60px; }
.start svg { width: 20px; height: 20px; }
.find { width: 60px; margin-right: 4px; }
.find svg { width: 28px; height: 28px; }
.apps { display: flex; height: 50px; }
.app { width: 62px; position: relative; }
.app svg { width: 30px; height: 30px; }
.app::after { content: ""; position: absolute; left: 6px; right: 5px; bottom: 0; height: 3px; }
.app.open::after { background: #ff9aa5; }
.app.multi::after { background: linear-gradient(90deg, #ff9aa5 40px, #1a222c 40px, #1a222c 41px, #d07c88 41px); }
.app.active { background: #494d52; }
.app.active::after { left: 0; right: 0; background: #ff9aa5; }
.app b { position: absolute; left: 0; right: 0; top: 12px; line-height: 22px; font-size: 15px; color: #9999ff; }
.app b.autocad { color: #fff; font-size: 17px; top: 9px; }
.app small { position: absolute; left: 4px; right: 0; top: 31px; line-height: 9px; font-size: 7px; font-weight: 700; color: #fff; }
.tray { flex: 1; display: flex; align-items: center; justify-content: flex-end; }
.tray > svg { width: 20px; height: 20px; margin-right: 10px; }
.lang { margin: 0 15px 0 3px; font-size: 14px; }
.datetime { width: 80px; display: flex; flex-direction: column; align-items: center; line-height: 23px; font-size: 14px; margin-right: 21px; }
.notice { position: relative; width: 20px; height: 20px; }
.notice svg { width: 20px; height: 20px; }
.notice b { position: absolute; left: 9px; top: 8px; width: 21px; height: 21px; line-height: 19px; border: 1px solid #888; border-radius: 50%; background: #33373a; font-size: 14px; font-weight: 400; }
.peek { width: 1px; height: 50px; margin: 0 5px 0 25px; background: #777; }
</style>
